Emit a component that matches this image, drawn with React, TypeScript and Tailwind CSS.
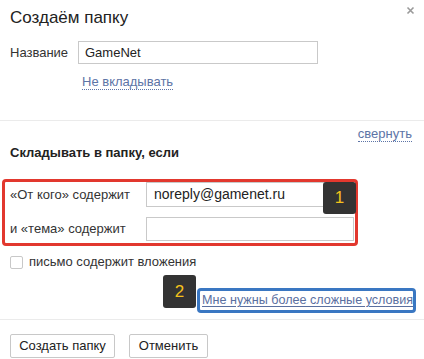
export default function App() {
  return (
    <div className="relative w-[424px] h-[359px] bg-white text-[13px] text-[#333] font-['Liberation_Sans',Arial,sans-serif] overflow-hidden">
      <button
        type="button"
        className="absolute left-[406px] top-[6px] w-[9px] h-[9px] text-[#9a9a9a]"
        aria-label="Закрыть"
      >
        <svg viewBox="0 0 9 9" width="9" height="9">
          <path d="M1.5 1.5 7.5 7.5 M7.5 1.5 1.5 7.5" stroke="currentColor" strokeWidth="1.6" />
        </svg>
      </button>

      <div className="px-[10px]">
        <h1 className="mt-[7px] h-[22px] leading-[22px] text-[17px] font-normal text-[#222]">Создаём папку</h1>
        <div className="mt-[12px] flex items-center">
          <label className="w-[68px] leading-[16px]">Название</label>
          <div className="w-[240px] h-[23px] border border-[#c9c9c9] px-[6px] flex items-center text-[#222]">
            GameNet
          </div>
        </div>
        <div className="mt-[8px] pl-[72px] h-[17px]">
          <span className="leading-[15px] inline-block border-b border-dotted border-[#5d74a6] text-[#5d74a6]">
            Не вкладывать
          </span>
        </div>
      </div>

      <div className="mt-[31px] h-px bg-[#ebebeb]" />

      <div className="flex justify-end pr-[12px] mt-[6px] h-[15px]">
        <span className="leading-[14px] inline-block border-b border-dotted border-[#5d74a6] text-[#5d74a6]">свернуть</span>
      </div>
      <div className="px-[10px] mt-[3px] leading-[16px] font-bold text-[#222]">Складывать в папку, если</div>

      <div className="mt-[18px] ml-[2px] w-[356px] h-[67px] border-[3px] border-[#e2382e] rounded-[4px] pl-[5px]">
        <div className="flex items-center">
          <span className="w-[136px]">«От кого» содержит</span>
          <div className="w-[208px] h-[25px] border border-[#c9c9c9] px-[7px] flex items-center text-[14px] text-[#222]">
            noreply@gamenet.ru
          </div>
        </div>
        <div className="mt-[10px] flex items-center">
          <span className="w-[136px]">и «тема» содержит</span>
          <div className="w-[208px] h-[24px] border border-[#c9c9c9]" />
        </div>
      </div>

      <div className="absolute left-[323px] top-[182px] w-[33px] h-[32px] rounded-[3px] bg-[#333] text-[#f5c21b] text-[17px] font-light flex items-center justify-center">
        1
      </div>

      <label className="mt-[10px] ml-[10px] flex items-center gap-[6px] h-[12px]">
        <span className="w-[13px] h-[13px] rounded-[2px] border border-[#c8c8c8] bg-white" />
        <span className="leading-[14px]">письмо содержит вложения</span>
      </label>

      <div className="mt-[20px] flex justify-end pr-[8px]">
        <div className="w-[219px] h-[25px] border-[3px] border-[#3a77c2] rounded-[4px] flex items-center pl-[2px]">
          <span className="whitespace-nowrap text-[12.6px] text-[#5a6f9f] underline underline-offset-2 leading-[15px]">
            Мне нужны более сложные условия
          </span>
        </div>
      </div>

      <div className="absolute left-[163px] top-[275px] w-[33px] h-[33px] rounded-[3px] bg-[#333] text-[#f5c21b] text-[17px] font-light flex items-center justify-center">
        2
      </div>

      <div className="mt-[6px] h-px bg-[#ebebeb]" />

      <div className="mt-[14px] px-[10px] flex gap-[14px]">
        <button type="button" className="w-[105px] h-[24px] border border-[#c8c8c8] rounded-[2px] bg-white text-[#222]">
          Создать папку
        </button>
        <button type="button" className="w-[79px] h-[24px] border border-[#c8c8c8] rounded-[2px] bg-white text-[#222]">
          Отменить
        </button>
      </div>
    </div>
  );
}
